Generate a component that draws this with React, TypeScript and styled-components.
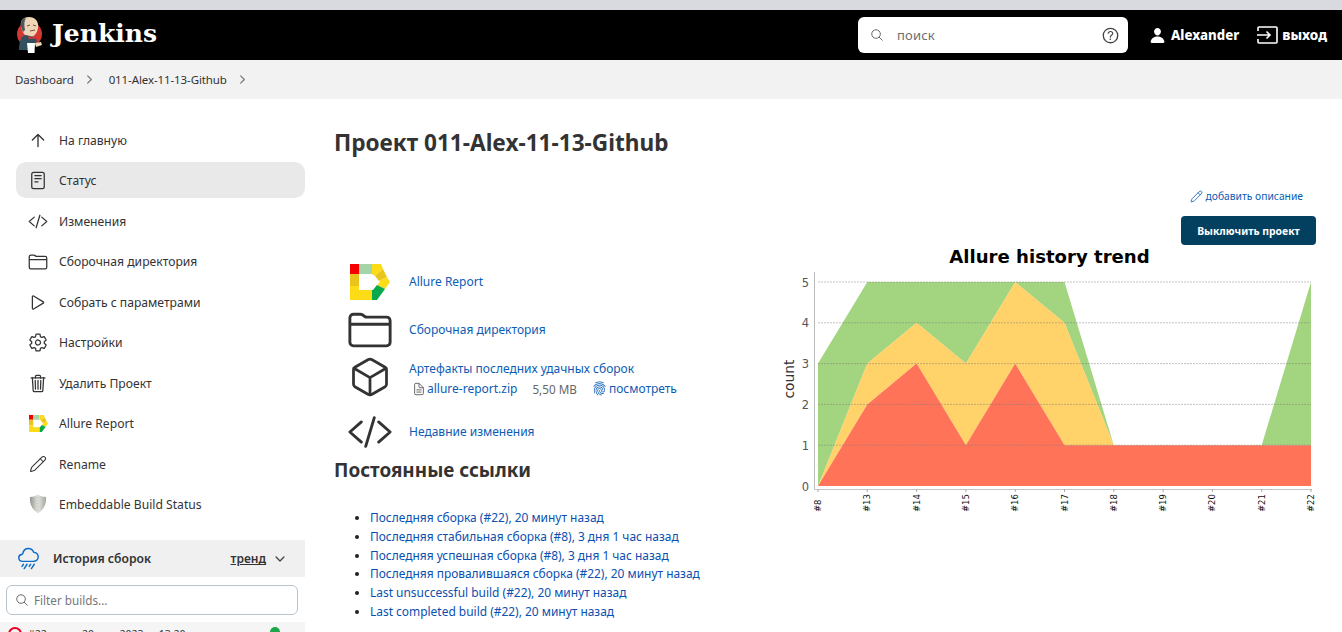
import React from 'react';
import styled, { createGlobalStyle } from 'styled-components';
import { Pencil } from 'lucide-react';
import {
  IoArrowUpOutline,
  IoChevronDownOutline,
  IoChevronForwardOutline,
  IoCodeSlashOutline,
  IoCubeOutline,
  IoDocumentTextOutline,
  IoFingerPrintOutline,
  IoFolderOutline,
  IoHelpCircleOutline,
  IoPerson,
  IoPlayOutline,
  IoRainyOutline,
  IoReaderOutline,
  IoSearchOutline,
  IoSettingsOutline,
  IoTrashOutline,
} from 'react-icons/io5';

const GlobalStyle = createGlobalStyle`
  html, body {
    margin: 0;
    height: 632px;
    overflow: hidden;
    background: #fff;
    font-family: "Noto Sans", "Open Sans", sans-serif;
    color: #333;
  }
`;

const AllureLogo = ({ size }: { size: number }) => (
  <svg width={size} height={size * 0.9} viewBox="0 0 40 36">
    <polygon points="0,0 9,0 9,10 0,10" fill="#f40000" />
    <polygon points="9,0 22,0 22,10 9,10" fill="#a3d5a8" />
    <polygon points="22,0 31,0 33,5 25,12 22,10" fill="#fbdc16" />
    <polygon points="33,5 37,13 29,17 25,12" fill="#e9c51b" />
    <polygon points="37,13 40,18 35,25 27,21 30,18 29,17" fill="#fbdc16" />
    <polygon points="35,25 27,36 22,36 22,26 23,26 27,21" fill="#09a84b" />
    <polygon points="0,10 9,10 9,22 0,22" fill="#e9c51b" />
    <polygon points="0,22 9,22 9,26 22,26 22,36 0,36" fill="#fbdc16" />
  </svg>
);

const JenkinsLogo = () => (
  <svg width="26" height="36" viewBox="0 0 26 36">
    <circle cx="12.5" cy="17" r="12.5" fill="#d33833" />
    <path d="M4 9 C3 3 7 0 12 0 C18 0 22 4 21 11 C20 17 16 21 12 20 C8 20 5 15 4 9 Z" fill="#f0d6b7" />
    <path d="M4 10 C3 4 6 1 9 1 C7 4 7 8 8 13 L6 15 Z" fill="#4a5a63" />
    <path d="M10 9 L13 8 M16 8 L19 9 M13 14 L18 13" stroke="#6d5140" strokeWidth="1" fill="none" />
    <path d="M2 33 C2 23 5 18 9 18 L17 20 C20 21 20 25 19 27 L16 33 Z" fill="#335061" />
    <path d="M11 19 L15 20.5 L19 18.5 L18.5 22 L15 21.5 L12 22.5 Z" fill="#d33833" />
    <path d="M10 26 L18 26 L17.5 36 L11 36 Z" fill="#fff" />
    <path d="M18 26 L24 25 L25 28 L19 30 Z" fill="#f0d6b7" />
  </svg>
);

const ExitIcon = () => (
  <svg width="21" height="18" viewBox="0 0 21 18" fill="none" stroke="#fff" strokeWidth="1.6">
    <path d="M1 5 V2 Q1 1 2 1 H19 Q20 1 20 2 V16 Q20 17 19 17 H2 Q1 17 1 16 V13" />
    <path d="M0 9 H13 M9.5 5.5 L13 9 L9.5 12.5" />
  </svg>
);

const ShieldIcon = () => (
  <svg width="18" height="20" viewBox="0 0 18 20">
    <defs>
      <linearGradient id="shield" x1="0" x2="1" y1="0" y2="0">
        <stop offset="0" stopColor="#8f948c" />
        <stop offset="0.5" stopColor="#e4e5e0" />
        <stop offset="1" stopColor="#a3a79f" />
      </linearGradient>
    </defs>
    <path d="M1 3 Q5 3 9 0.5 Q13 3 17 3 Q18 13 9 19.5 Q0 13 1 3 Z" fill="url(#shield)" />
    <path d="M9 3 V18" stroke="#b9bbb4" strokeWidth="1" strokeDasharray="1.5 1.5" />
  </svg>
);

const X_POS = (i: number) => 818 + i * 49.3;
const Y_POS = (v: number) => 486 - v * 40.8;
const BUILD_NUMBERS = [8, 13, 14, 15, 16, 17, 18, 19, 20, 21, 22];
const RED_TOP = [0, 2, 3, 1, 3, 1, 1, 1, 1, 1, 1];
const YELLOW_TOP = [0, 3, 4, 3, 5, 4, 1, 1, 1, 1, 1];
const GREEN_TOP = [3, 5, 5, 5, 5, 5, 1, 1, 1, 1, 5];
const ZERO = BUILD_NUMBERS.map(() => 0);

// полоса между двумя линиями стека
const bandPoints = (lower: number[], upper: number[]) => {
  const top = upper.map((v, i) => `${X_POS(i)},${Y_POS(v)}`);
  const bottom = lower.map((v, i) => `${X_POS(i)},${Y_POS(v)}`).reverse();
  return [...top, ...bottom].join(' ');
};

const TrendChart = () => (
  <ChartSvg width="540" height="272" viewBox="780 245 540 272">
    <polygon points={bandPoints(YELLOW_TOP, GREEN_TOP)} fill="#8ccb60" fillOpacity="0.8" />
    <polygon points={bandPoints(RED_TOP, YELLOW_TOP)} fill="#ffc745" fillOpacity="0.8" />
    <polygon points={bandPoints(ZERO, RED_TOP)} fill="#ff5030" fillOpacity="0.8" />
    {[1, 2, 3, 4, 5].map(v => (
      <line
        key={v}
        x1="818"
        x2="1311"
        y1={Y_POS(v)}
        y2={Y_POS(v)}
        stroke="#777"
        strokeOpacity="0.45"
        strokeWidth="1"
        strokeDasharray="2 1"
      />
    ))}
    <line x1="814.5" x2="814.5" y1="272" y2="489" stroke="#bbb" />
    <line x1="814" x2="1312" y1="489.5" y2="489.5" stroke="#c4c4c4" />
    {[0, 1, 2, 3, 4, 5].map(v => (
      <AxisLabel key={v} x="809" y={Y_POS(v) + 4.5} textAnchor="end">
        {v}
      </AxisLabel>
    ))}
    <CountLabel transform="translate(794 379) rotate(-90)" textAnchor="middle">
      count
    </CountLabel>
    {BUILD_NUMBERS.map((n, i) => (
      <g key={n}>
        <line x1={X_POS(i)} x2={X_POS(i)} y1="489" y2="492" stroke="#aaa" />
        <BuildLabel transform={`translate(${X_POS(i) + 3} 512) rotate(-90)`}>#{n}</BuildLabel>
      </g>
    ))}
    <ChartTitle x="1049.5" y="263" textAnchor="middle">
      Allure history trend
    </ChartTitle>
  </ChartSvg>
);

const ThinArrow = styled(IoArrowUpOutline)`
  * {
    stroke-width: 34px;
  }
`;

const navItems = [
  { label: 'На главную', icon: <ThinArrow size={21} /> },
  { label: 'Статус', icon: <IoReaderOutline size={21} />, active: true },
  { label: 'Изменения', icon: <IoCodeSlashOutline size={21} /> },
  { label: 'Сборочная директория', icon: <IoFolderOutline size={22} /> },
  { label: 'Собрать с параметрами', icon: <IoPlayOutline size={21} /> },
  { label: 'Настройки', icon: <IoSettingsOutline size={21} /> },
  { label: 'Удалить Проект', icon: <IoTrashOutline size={21} /> },
  { label: 'Allure Report', icon: <AllureLogo size={19} /> },
  { label: 'Rename', icon: <Pencil size={18} strokeWidth={1.4} /> },
  { label: 'Embeddable Build Status', icon: <ShieldIcon /> },
];

const permalinks = [
  'Последняя сборка (#22), 20 минут назад',
  'Последняя стабильная сборка (#8), 3 дня 1 час назад',
  'Последняя успешная сборка (#8), 3 дня 1 час назад',
  'Последняя провалившаяся сборка (#22), 20 минут назад',
  'Last unsuccessful build (#22), 20 минут назад',
  'Last completed build (#22), 20 минут назад',
];

const App = () => (
  <Page>
    <GlobalStyle />
    <BrowserStrip />
    <Header>
      <LogoLink>
        <JenkinsLogo />
        <LogoText>Jenkins</LogoText>
      </LogoLink>
      <SearchBox>
        <IoSearchOutline size={14} color="#555" />
        <SearchPlaceholder>поиск</SearchPlaceholder>
        <IoHelpCircleOutline size={21} color="#444" />
      </SearchBox>
      <UserLink>
        <IoPerson size={17} />
        Alexander
      </UserLink>
      <ExitLink>
        <ExitIcon />
        выход
      </ExitLink>
    </Header>
    <Breadcrumbs>
      <Crumb>Dashboard</Crumb>
      <IoChevronForwardOutline size={13} color="#777" />
      <Crumb>011-Alex-11-13-Github</Crumb>
      <IoChevronForwardOutline size={13} color="#777" />
    </Breadcrumbs>
    <Body>
      <Sidebar>
        <Nav>
          {navItems.map(item => (
            <NavItem key={item.label} $active={item.active}>
              <NavIcon>{item.icon}</NavIcon>
              {item.label}
            </NavItem>
          ))}
        </Nav>
        <HistoryHeader>
          <IoRainyOutline size={23} color="#0b6bcb" />
          <HistoryTitle>История сборок</HistoryTitle>
          <TrendLink>тренд</TrendLink>
          <IoChevronDownOutline size={14} color="#444" />
        </HistoryHeader>
        <FilterBox>
          <IoSearchOutline size={14} color="#555" />
          Filter builds...
        </FilterBox>
        <BuildRow>
          <FailedBadge />
          <BuildNumber>#22</BuildNumber>
          <BuildDate>20 мая 2023 г., 13:20</BuildDate>
          <BuildStatus />
        </BuildRow>
      </Sidebar>
      <Main>
        <ProjectTitle>Проект 011-Alex-11-13-Github</ProjectTitle>
        <DescriptionRow>
          <Pencil size={13} strokeWidth={1.5} />
          добавить описание
        </DescriptionRow>
        <ButtonRow>
          <DisableButton>Выключить проект</DisableButton>
        </ButtonRow>
        <Columns>
          <LeftColumn>
            <LinkRow>
              <LinkIcon>
                <AllureLogo size={40} />
              </LinkIcon>
              <LinkText>Allure Report</LinkText>
            </LinkRow>
            <LinkRow>
              <LinkIcon>
                <IoFolderOutline size={46} />
              </LinkIcon>
              <LinkText>Сборочная директория</LinkText>
            </LinkRow>
            <LinkRow $tall>
              <LinkIcon>
                <IoCubeOutline size={44} />
              </LinkIcon>
              <div>
                <LinkText>Артефакты последних удачных сборок</LinkText>
                <ArtifactLine>
                  <IoDocumentTextOutline size={14} color="#555" />
                  <LinkText>allure-report.zip</LinkText>
                  <ArtifactSize>5,50 MB</ArtifactSize>
                  <FingerLink>
                    <IoFingerPrintOutline size={15} />
                    <LinkText>посмотреть</LinkText>
                  </FingerLink>
                </ArtifactLine>
              </div>
            </LinkRow>
            <LinkRow>
              <LinkIcon>
                <IoCodeSlashOutline size={46} />
              </LinkIcon>
              <LinkText>Недавние изменения</LinkText>
            </LinkRow>
            <SectionTitle>Постоянные ссылки</SectionTitle>
            <PermalinkList>
              {permalinks.map(text => (
                <li key={text}>{text}</li>
              ))}
            </PermalinkList>
          </LeftColumn>
          <TrendChart />
        </Columns>
      </Main>
    </Body>
  </Page>
);

const Page = styled.div`
  height: 632px;
  overflow: hidden;
  display: flex;
  flex-direction: column;
`;

const BrowserStrip = styled.div`
  height: 10px;
  flex: none;
  background: #d9dae0;
`;

const Header = styled.header`
  height: 50px;
  flex: none;
  background: #000;
  color: #fff;
  display: flex;
  align-items: center;
  padding: 0 15px 0 17px;
`;

const LogoLink = styled.div`
  display: flex;
  align-items: center;
  margin-right: auto;
`;

const LogoText = styled.span`
  font-family: "DejaVu Serif", "Liberation Serif", serif;
  font-weight: 700;
  font-size: 25px;
  margin-left: 9px;
  padding-bottom: 3px;
`;

const SearchBox = styled.div`
  width: 270px;
  height: 36px;
  box-sizing: border-box;
  background: #fff;
  border-radius: 6px;
  display: flex;
  align-items: center;
  padding: 0 7px 0 12px;
`;

const SearchPlaceholder = styled.span`
  flex: 1;
  margin-left: 13px;
  font-size: 13px;
  letter-spacing: 0.2px;
  color: #6d6d6d;
`;

const UserLink = styled.div`
  display: flex;
  align-items: center;
  gap: 5px;
  margin-left: 21px;
  font-size: 13.2px;
  font-weight: 800;
`;

const ExitLink = styled.div`
  display: flex;
  align-items: center;
  gap: 4px;
  margin-left: 18px;
  font-size: 13.5px;
  font-weight: 800;
`;

const Breadcrumbs = styled.nav`
  height: 39px;
  flex: none;
  background: #f2f2f2;
  display: flex;
  align-items: center;
  padding-left: 15px;
`;

const Crumb = styled.span`
  font-size: 11.5px;
  letter-spacing: -0.1px;
  color: #333;
  & + svg {
    margin: 0 12.5px 0 9.5px;
  }
`;

const Body = styled.div`
  flex: 1;
  display: flex;
  min-height: 0;
`;

const Sidebar = styled.aside`
  width: 305px;
  flex: none;
  display: flex;
  flex-direction: column;
`;

const Nav = styled.nav`
  flex: none;
  display: flex;
  flex-direction: column;
  gap: 4.44px;
  padding: 23px 0 0 16px;
`;

const NavItem = styled.div<{ $active?: boolean }>`
  height: 36px;
  box-sizing: border-box;
  padding-top: 1px;
  display: flex;
  align-items: center;
  gap: 11px;
  padding-left: 12px;
  border-radius: 10px;
  font-size: 12.15px;
  color: #333;
  background: ${props => (props.$active ? '#e9e9ea' : 'transparent')};
`;

const NavIcon = styled.span`
  width: 20px;
  height: 22px;
  display: flex;
  align-items: center;
  justify-content: center;
  flex: none;
`;

const HistoryHeader = styled.div`
  height: 37px;
  flex: none;
  margin-top: 18.4px;
  background: #f0f0f0;
  display: flex;
  align-items: center;
  padding: 0 18px 0 17px;
`;

const HistoryTitle = styled.span`
  margin-left: 13px;
  font-size: 12.15px;
  font-weight: 600;
  flex: 1;
`;

const TrendLink = styled.span`
  font-size: 12px;
  font-weight: 600;
  text-decoration: underline;
  margin-right: 7px;
`;

const FilterBox = styled.div`
  height: 30px;
  flex: none;
  box-sizing: border-box;
  margin: 8px 7px 7px 6px;
  border: 1px solid #b9c4cf;
  border-radius: 6px;
  display: flex;
  align-items: center;
  gap: 5px;
  padding-left: 8px;
  font-size: 11.7px;
  color: #777;
`;

const BuildRow = styled.div`
  height: 30px;
  flex: none;
  background: #f5f5f5;
  display: flex;
  align-items: flex-start;
  padding: 5px 25px 0 8px;
`;

const FailedBadge = styled.span`
  width: 10px;
  height: 10px;
  margin-right: 6px;
  border: 2px solid #e6001f;
  border-radius: 50%;
  flex: none;
`;

const BuildNumber = styled.span`
  font-size: 10.5px;
  line-height: 14px;
  width: 54px;
  flex: none;
`;

const BuildDate = styled.span`
  font-size: 10.5px;
  line-height: 14px;
  white-space: nowrap;
`;

const BuildStatus = styled.span`
  width: 10px;
  height: 10px;
  border-radius: 50%;
  background: #1ea64b;
  margin-left: auto;
`;

const Main = styled.main`
  flex: 1;
  min-width: 0;
  padding: 0 26px 0 29px;
  display: flex;
  flex-direction: column;
`;

const ProjectTitle = styled.h1`
  margin: 28px 0 0;
  font-size: 22.6px;
  line-height: 32px;
  font-weight: 700;
  color: #333;
`;

const DescriptionRow = styled.div`
  margin-top: 26px;
  height: 22px;
  display: flex;
  justify-content: flex-end;
  align-items: center;
  gap: 3px;
  padding-right: 13px;
  font-size: 10.3px;
  color: #0b5cb5;
`;

const ButtonRow = styled.div`
  margin-top: 9px;
  display: flex;
  justify-content: flex-end;
`;

const DisableButton = styled.button`
  width: 135px;
  height: 29px;
  border: none;
  padding: 0;
  border-radius: 4px;
  background: #03405f;
  color: #fff;
  font-family: inherit;
  font-size: 10.4px;
  font-weight: 700;
`;

const Columns = styled.div`
  display: flex;
  align-items: flex-start;
`;

const LeftColumn = styled.div`
  width: 446px;
  flex: none;
  padding-top: 13px;
`;

const ChartSvg = styled.svg`
  display: block;
  flex: none;
`;

const ChartTitle = styled.text`
  font-family: "DejaVu Sans", sans-serif;
  font-size: 18.1px;
  font-weight: 700;
  fill: #000;
`;

const AxisLabel = styled.text`
  font-family: "DejaVu Sans", sans-serif;
  font-size: 11.5px;
  fill: #555;
`;

const CountLabel = styled.text`
  font-family: "DejaVu Sans", sans-serif;
  font-size: 13.8px;
  fill: #333;
`;

const BuildLabel = styled.text`
  font-family: "DejaVu Sans", sans-serif;
  font-size: 8.5px;
  fill: #111;
`;

const LinkRow = styled.div<{ $tall?: boolean }>`
  height: ${props => (props.$tall ? '50px' : '48px')};
  box-sizing: border-box;
  padding-bottom: ${props => (props.$tall ? '4px' : '0')};
  margin-bottom: ${props => (props.$tall ? '4px' : '0')};
  display: flex;
  align-items: center;
  gap: 15px;
  padding-left: 11px;
`;

const LinkIcon = styled.span`
  width: 49px;
  height: 48px;
  flex: none;
  display: flex;
  align-items: center;
  justify-content: center;
  color: #333;
`;

const LinkText = styled.span`
  font-size: 12px;
  line-height: 20px;
  color: #0b5cb5;
`;

const ArtifactLine = styled.div`
  display: flex;
  align-items: center;
  margin-left: 3px;
  gap: 1px;
`;

const ArtifactSize = styled.span`
  margin-left: 14px;
  font-size: 11.7px;
  color: #666;
`;

const FingerLink = styled.span`
  display: flex;
  align-items: center;
  gap: 2px;
  margin-left: 14px;
  color: #0b5cb5;
`;

const SectionTitle = styled.h2`
  margin: 2px 0 0;
  font-size: 18.9px;
  line-height: 24px;
  font-weight: 700;
  color: #333;
`;

const PermalinkList = styled.ul`
  margin: 27px 0 0;
  padding-left: 36px;
  font-size: 11.95px;
  line-height: 18.8px;
  color: #0b4fb0;
  li::marker {
    color: #222;
  }
`;

export default App;
